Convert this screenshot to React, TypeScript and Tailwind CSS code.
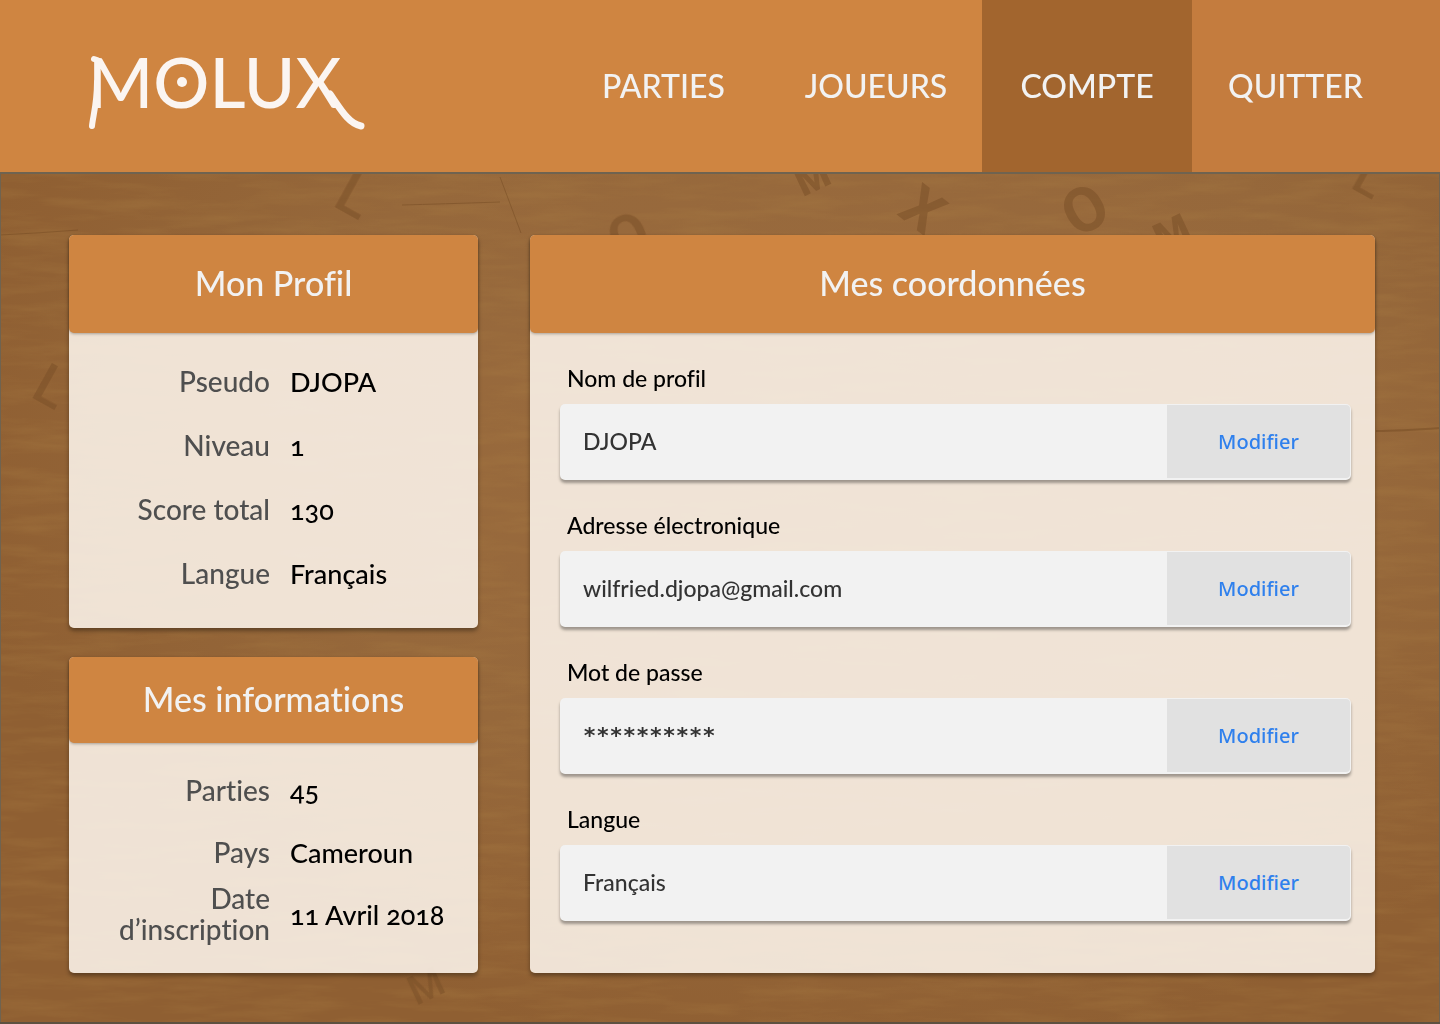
import React from "react";

type Row = { label: string; value: string };

const profile: Row[] = [
  { label: "Pseudo", value: "DJOPA" },
  { label: "Niveau", value: "1" },
  { label: "Score total", value: "130" },
  { label: "Langue", value: "Français" },
];

const informations: Row[] = [
  { label: "Parties", value: "45" },
  { label: "Pays", value: "Cameroun" },
  { label: "Date d’inscription", value: "11 Avril 2018" },
];

const fields = [
  { id: "nom", label: "Nom de profil", value: "DJOPA" },
  { id: "email", label: "Adresse électronique", value: "wilfried.djopa@gmail.com" },
  { id: "passe", label: "Mot de passe", value: "**********", masked: true },
  { id: "langue", label: "Langue", value: "Français" },
];

const marks = [
  { c: "L", x: 331, y: 206, r: 29, s: 60, w: 500 },
  { c: "M", x: 803, y: 198, r: -25, s: 38, w: 900 },
  { c: "X", x: 896, y: 215, r: 38, s: 58, w: 700 },
  { c: "O", x: 1077, y: 240, r: -30, s: 62, w: 700 },
  { c: "M", x: 1162, y: 254, r: -25, s: 40, w: 900 },
  { c: "L", x: 1349, y: 188, r: 29, s: 50, w: 500 },
  { c: "O", x: 619, y: 262, r: -25, s: 56, w: 700 },
  { c: "L", x: 29, y: 397, r: 29, s: 56, w: 500 },
  { c: "M", x: 416, y: 1007, r: -25, s: 40, w: 500 },
];

function Wood() {
  return (
    <svg
      aria-hidden="true"
      className="absolute inset-0 -z-10 h-full w-full"
      viewBox="0 0 1440 1024"
      preserveAspectRatio="xMidYMid slice"
    >
      <defs>
        <radialGradient id="tone" cx="0.58" cy="0.42" r="0.62">
          <stop offset="0" stopColor="#9a6b3e" />
          <stop offset="0.6" stopColor="#96683b" />
          <stop offset="1" stopColor="#8f5f32" />
        </radialGradient>
        <filter id="grain" x="0" y="0" width="100%" height="100%">
          <feTurbulence type="fractalNoise" baseFrequency="0.012 0.09" numOctaves="5" seed="21" />
          <feColorMatrix values="0 0 0 0 0.42  0 0 0 0 0.22  0 0 0 0 0.06  1.4 0 0 0 -0.55" />
        </filter>
      </defs>
      <rect width="1440" height="1024" fill="url(#tone)" />
      <rect width="1440" height="1024" filter="url(#grain)" opacity="0.4" />
      <g fill="none" stroke="#6b431d" opacity="0.4">
        <path d="M0 236 Q40 234 78 231" />
        <path d="M1376 432 Q1400 432 1440 429" strokeWidth="2" />
        <path d="M402 206 Q440 205 500 203" />
        <path d="M500 178 L521 234" />
      </g>
      <g fill="#7b5029" opacity="0.55" fontFamily="Roboto, sans-serif">
        {marks.map((m, i) => (
          <text key={i} fontSize={m.s} fontWeight={m.w} transform={`translate(${m.x} ${m.y}) rotate(${m.r})`}>
            {m.c}
          </text>
        ))}
      </g>
    </svg>
  );
}

function Logo() {
  return (
    <svg role="img" aria-label="Molux" className="h-[110px] w-[290px]" viewBox="80 28 290 110" fill="#fbf5f1">
      <text x="88" y="108" fontSize="70" fontWeight="500" fontFamily="Lato, sans-serif">
        MOLUX
      </text>
      <circle cx="182" cy="82" r="5" />
      <g fill="none" stroke="#fbf5f1" strokeLinecap="round">
        <path d="M97 60 L94 59" strokeWidth="6" />
        <path d="M97 82 C97 104 93 116 92 126" strokeWidth="6" />
        <path d="M330 94 C341 110 349 124 361 126" strokeWidth="7" />
      </g>
    </svg>
  );
}

function Card({
  title,
  tall,
  children,
}: {
  title: string;
  tall?: boolean;
  children: React.ReactNode;
}) {
  return (
    <section className="flex flex-col rounded-[5px] bg-[#f9f1e7]/90 shadow-[0_3px_4px_rgba(0,0,0,0.35)]">
      <h2
        className={`flex items-center justify-center rounded-[5px] bg-[#cf8541] pb-1 text-[34px] font-medium text-[#f2f2f2] shadow-[0_1px_3px_rgba(0,0,0,0.3)] ${
          tall ? "h-[98px]" : "h-[86px]"
        }`}
      >
        {title}
      </h2>
      {children}
    </section>
  );
}

function Rows({ rows, loose }: { rows: Row[]; loose?: boolean }) {
  return (
    <dl className={loose ? "pt-4 pb-[23px]" : "pt-4 pb-7"}>
      {rows.map((r) => (
        <div
          key={r.label}
          className={`grid grid-cols-[201fr_188fr] items-center gap-x-5 leading-[31px] font-medium ${
            loose ? "h-16" : "h-[62px]"
          }`}
        >
          <dt className="text-right text-[28px] text-[#4f4f4f]">{r.label}</dt>
          <dd className="text-[27px] whitespace-nowrap text-black oldstyle-nums">{r.value}</dd>
        </div>
      ))}
    </dl>
  );
}

export default function App() {
  return (
    <div className="relative isolate flex min-h-screen flex-col overflow-hidden border-b-2 border-[#5d5140] font-['Lato','Noto_Sans',sans-serif] [font-variant-ligatures:no-common-ligatures]">
      <Wood />
      <header className="flex h-[173px] border-b border-[#6f6350] bg-[#cf8541]">
        <a href="#accueil" className="mt-7 ml-20">
          <Logo />
        </a>
        <nav className="ml-auto flex text-[32px] font-medium text-[#f2f2f2]">
          <a href="#parties" className="flex w-[213px] items-center justify-center">
            PARTIES
          </a>
          <a href="#joueurs" className="flex w-[212px] items-center justify-center">
            JOUEURS
          </a>
          <a href="#compte" aria-current="page" className="flex w-[210px] items-center justify-center bg-[#a2652e]">
            COMPTE
          </a>
          <a href="#quitter" className="flex w-[248px] items-center bg-[#c47c3e] pl-9">
            QUITTER
          </a>
        </nav>
      </header>

      <main className="grid flex-1 grid-cols-[409fr_845fr] gap-x-[52px] border-x border-t border-[#6f6350] pt-[61px] pr-16 pb-[49px] pl-[68px]">
        <div className="flex flex-col gap-[29px]">
          <Card title="Mon Profil" tall>
            <Rows rows={profile} loose />
          </Card>
          <Card title="Mes informations">
            <Rows rows={informations} />
          </Card>
        </div>

        <Card title="Mes coordonnées" tall>
          <form className="flex flex-col gap-[31px] pt-[31px] pr-6 pb-[52px] pl-[30px]">
            {fields.map((f) => (
              <div key={f.id} className="flex flex-col gap-3">
                <label htmlFor={f.id} className="pl-[7px] text-[23px] leading-7 font-medium text-black">
                  {f.label}
                </label>
                <div className="flex h-[76px] rounded-[5px] bg-[#f2f2f2] pt-px pr-px pb-0.5 shadow-[0_3px_3px_rgba(0,0,0,0.35)]">
                  <input
                    id={f.id}
                    type="text"
                    defaultValue={f.value}
                    className={`min-w-0 flex-1 bg-transparent pl-[23px] text-[#333333] outline-none ${
                      f.masked ? "font-['DejaVu_Sans_Mono',monospace] text-[22px] font-bold" : "text-[23px] font-medium"
                    }`}
                  />
                  <button
                    type="button"
                    className="w-[183px] rounded-r-[4px] bg-[#e1e1e1] font-['Noto_Sans',sans-serif] text-xl font-medium text-[#2f80ed]"
                  >
                    Modifier
                  </button>
                </div>
              </div>
            ))}
          </form>
        </Card>
      </main>
    </div>
  );
}
